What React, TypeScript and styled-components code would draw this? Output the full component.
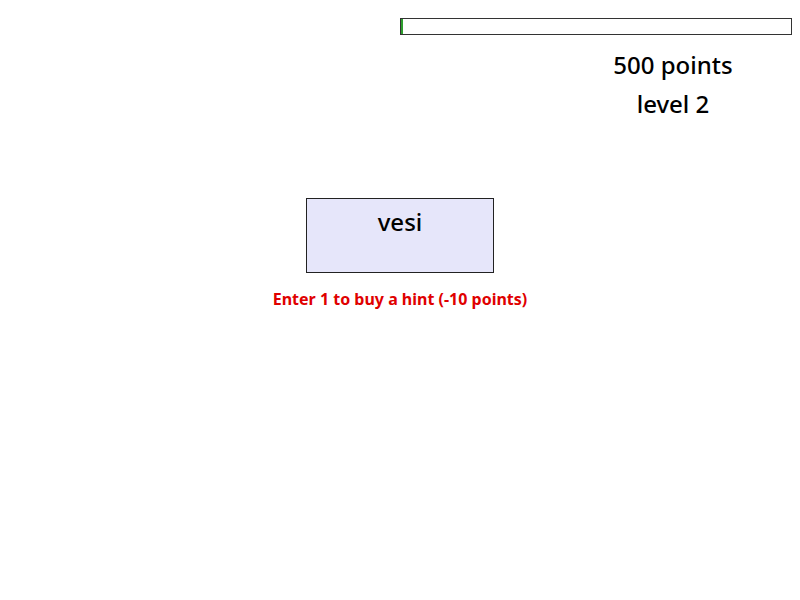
import React from "react";
import styled, { createGlobalStyle } from "styled-components";

const GlobalStyle = createGlobalStyle`
  body {
    margin: 8px;
    background: #ffffff;
    font-family: "Noto Sans", "Open Sans", sans-serif;
    color: #000000;
  }
`;

const Page = styled.div`
  display: flex;
  flex-direction: column;
`;

const TopBar = styled.div`
  display: flex;
  flex-direction: column;
  align-items: flex-end;
  margin-top: 10px;
`;

const Progress = styled.div`
  box-sizing: border-box;
  width: 50%;
  height: 17px;
  border: 1px solid #333333;
  background: #ffffff;
  display: flex;
`;

const ProgressFill = styled.div`
  background: #2e9e2e;
`;

const Stats = styled.div`
  width: 238px;
  display: flex;
  flex-direction: column;
  align-items: center;
  gap: 7px;
  margin-top: 14px;
`;

const StatLine = styled.div`
  font-size: 24px;
  font-weight: 500;
  line-height: 32px;
`;

const Game = styled.div`
  display: flex;
  flex-direction: column;
  align-items: center;
  margin-top: 78px;
`;

const WordCard = styled.div`
  width: 186px;
  height: 73px;
  border: 1px solid #222222;
  background: #e6e6fa;
  display: flex;
  justify-content: center;
`;

const Word = styled.div`
  font-size: 24px;
  font-weight: 500;
  line-height: 32px;
  margin-top: 7px;
`;

const Hint = styled.div`
  margin-top: 15px;
  color: #e00000;
  font-size: 16px;
  font-weight: 700;
  line-height: 22px;
`;

const App: React.FC = () => {
  const progress = 0.5;
  return (
    <Page>
      <GlobalStyle />
      <TopBar>
        <Progress>
          <ProgressFill style={{ width: `${progress}%`, minWidth: 2 }} />
        </Progress>
        <Stats>
          <StatLine>500 points</StatLine>
          <StatLine>level 2</StatLine>
        </Stats>
      </TopBar>
      <Game>
        <WordCard>
          <Word>vesi</Word>
        </WordCard>
        <Hint>Enter 1 to buy a hint (-10 points)</Hint>
      </Game>
    </Page>
  );
};

export default App;
